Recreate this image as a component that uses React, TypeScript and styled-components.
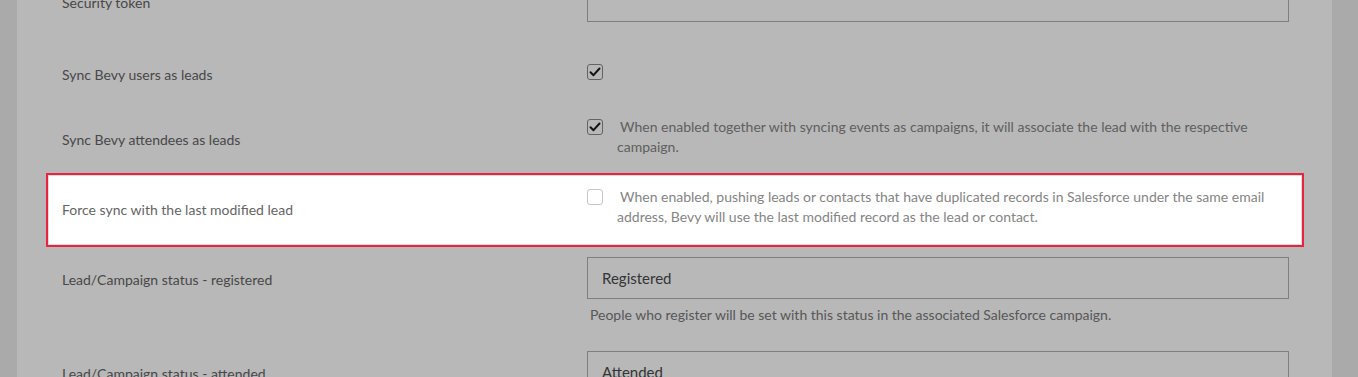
import styled, { createGlobalStyle, css } from "styled-components";

const GlobalStyle = createGlobalStyle`
  html, body {
    margin: 0;
    padding: 0;
    background: #ececec;
    font-family: Lato, "Liberation Sans", sans-serif;
    overflow: hidden;
  }
`;

const Page = styled.div`
  height: 377px;
  overflow: hidden;
`;

const Panel = styled.div`
  margin-left: 17px;
  width: 1315px;
  min-height: 420px;
  background: #fff;
  margin-top: -32px;
`;

// dims everything except the highlighted row
const Overlay = styled.div`
  position: fixed;
  inset: 0;
  background: rgba(0, 0, 0, 0.28);
  z-index: 10;
`;

const Row = styled.div<{ $mt?: number; $highlight?: boolean }>`
  display: grid;
  grid-template-columns: 525px 1fr;
  align-items: center;
  margin: ${(p) => p.$mt ?? 0}px 28px 0 29px;
  padding: 10px 13px 4px 14px;
  border: 2px solid transparent;
  background: #fff;

  ${(p) =>
    p.$highlight &&
    css`
      position: relative;
      z-index: 11;
      padding: 12px 13px 12px 14px;
      border-color: #ea2440;
      box-shadow: inset 0 0 0 1px #dcdcdc;
    `}
`;

const Label = styled.div<{ $top?: boolean }>`
  font-size: 14px;
  line-height: 20px;
  color: #656565;
  ${(p) =>
    p.$top &&
    css`
      align-self: start;
      height: 42px;
      display: flex;
      align-items: center;
      padding-top: 4px;
      box-sizing: border-box;
    `}
`;

const Control = styled.div`
  display: flex;
  flex-direction: column;
  padding-bottom: 6px;
`;

const Input = styled.div`
  height: 42px;
  box-sizing: border-box;
  border: 1px solid #b0b0b0;
  padding: 0 14px;
  display: flex;
  align-items: center;
  font-size: 15px;
  color: #4a4a4a;
`;

const Helper = styled.div`
  margin-top: 6px;
  padding-left: 3px;
  font-size: 14px;
  line-height: 20px;
  color: #7a7a7a;
`;

const CheckLine = styled.div`
  display: flex;
  align-items: flex-start;
  gap: 14px;
  padding-bottom: 6px;
`;

const Box = styled.span<{ $checked?: boolean }>`
  flex: none;
  width: 16px;
  height: 16px;
  margin: 2px 0;
  box-sizing: border-box;
  border: 1px solid ${(p) => (p.$checked ? "#8a8a8a" : "#c6c6c6")};
  border-radius: 3px;
  display: flex;
  align-items: center;
  justify-content: center;
`;

const Desc = styled.div`
  font-size: 14px;
  line-height: 20px;
  color: #858585;
  text-indent: 3px;
`;

const Checkbox = ({ checked }: { checked?: boolean }) => (
  <Box $checked={checked}>
    {checked && (
      <svg width="12" height="10" viewBox="0 0 12 10">
        <path d="M1.5 5.2 L4.5 8.2 L10.5 1.5" fill="none" stroke="#1e1e1e" strokeWidth="2" strokeLinecap="round" strokeLinejoin="round" />
      </svg>
    )}
  </Box>
);

export default function App() {
  return (
    <Page>
      <GlobalStyle />
      <Panel>
        <Row>
          <Label $top>Security token</Label>
          <Control>
            <Input />
          </Control>
        </Row>

        <Row $mt={16}>
          <Label>Sync Bevy users as leads</Label>
          <CheckLine>
            <Checkbox checked />
          </CheckLine>
        </Row>

        <Row $mt={11}>
          <Label>Sync Bevy attendees as leads</Label>
          <CheckLine>
            <Checkbox checked />
            <Desc>
              When enabled together with syncing events as campaigns, it will associate the lead with the respective
              campaign.
            </Desc>
          </CheckLine>
        </Row>

        <Row $mt={4} $highlight>
          <Label>Force sync with the last modified lead</Label>
          <CheckLine>
            <Checkbox />
            <Desc>
              When enabled, pushing leads or contacts that have duplicated records in Salesforce under the same email
              address, Bevy will use the last modified record as the lead or contact.
            </Desc>
          </CheckLine>
        </Row>

        <Row $mt={-2}>
          <Label $top>Lead/Campaign status - registered</Label>
          <Control>
            <Input>Registered</Input>
            <Helper>People who register will be set with this status in the associated Salesforce campaign.</Helper>
          </Control>
        </Row>

        <Row $mt={2}>
          <Label $top>Lead/Campaign status - attended</Label>
          <Control>
            <Input>Attended</Input>
          </Control>
        </Row>
      </Panel>
      <Overlay />
    </Page>
  );
}
